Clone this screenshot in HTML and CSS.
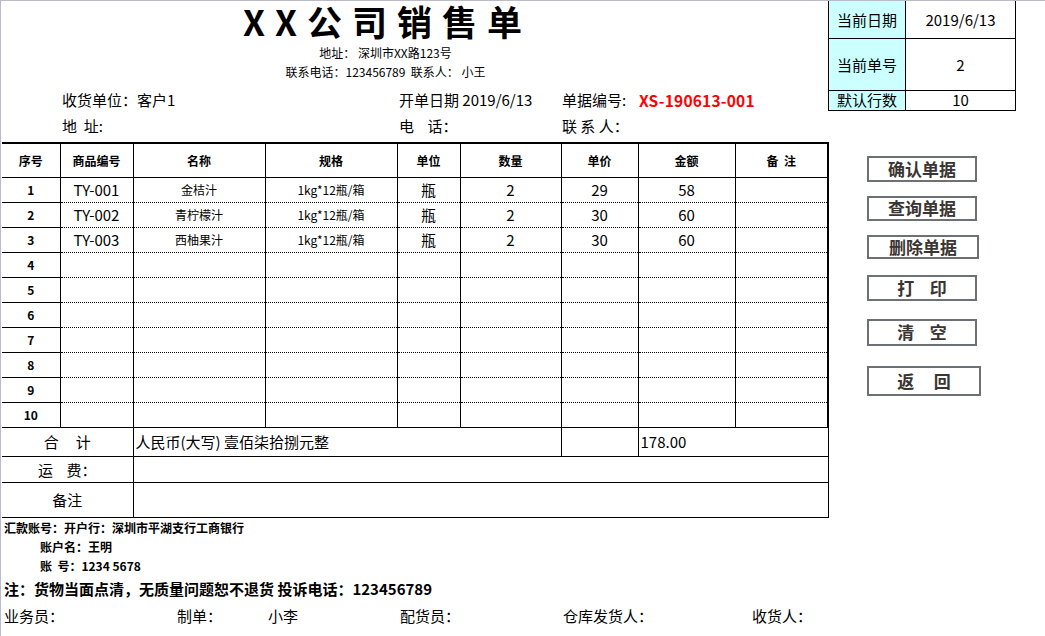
FILE: index.html
```html
<!DOCTYPE html>
<html lang="zh-CN">
<head>
<meta charset="utf-8">
<title>XX公司销售单</title>
<link rel="stylesheet" href="styles.css">
</head>
<body>
<div class="sheet">
  <div class="main">
    <header class="head">
      <h1 class="title">XX公司销售单</h1>
      <div class="addr">地址： 深圳市XX路123号</div>
      <div class="addr">联系电话：123456789&nbsp;&nbsp;联系人： 小王</div>
      <div class="info">
        <span>收货单位：客户1</span>
        <span>开单日期 2019/6/13</span>
        <span>单据编号:</span>
        <span class="red">XS-190613-001</span>
      </div>
      <div class="info">
        <span>地&nbsp;&nbsp;址:</span>
        <span>电&nbsp;&nbsp;&nbsp;&nbsp;话：</span>
        <span>联 系 人：</span>
        <span></span>
      </div>
    </header>

    <table class="grid">
      <colgroup>
        <col class="c1"><col class="c2"><col class="c3"><col class="c4"><col class="c5">
        <col class="c6"><col class="c7"><col class="c8"><col class="c9">
      </colgroup>
      <thead>
        <tr>
          <th>序号</th><th>商品编号</th><th>名称</th><th>规格</th><th>单位</th>
          <th>数量</th><th>单价</th><th>金额</th><th class="last">备&nbsp;&nbsp;注</th>
        </tr>
      </thead>
      <tbody class="rows">
        <tr><td class="no">1</td><td class="big">TY-001</td><td>金桔汁</td><td>1kg*12瓶/箱</td><td class="big">瓶</td><td class="big">2</td><td class="big">29</td><td class="big">58</td><td class="last"></td></tr>
        <tr><td class="no">2</td><td class="big">TY-002</td><td>青柠檬汁</td><td>1kg*12瓶/箱</td><td class="big">瓶</td><td class="big">2</td><td class="big">30</td><td class="big">60</td><td class="last"></td></tr>
        <tr><td class="no">3</td><td class="big">TY-003</td><td>西柚果汁</td><td>1kg*12瓶/箱</td><td class="big">瓶</td><td class="big">2</td><td class="big">30</td><td class="big">60</td><td class="last"></td></tr>
        <tr><td class="no">4</td><td></td><td></td><td></td><td></td><td></td><td></td><td></td><td class="last"></td></tr>
        <tr><td class="no">5</td><td></td><td></td><td></td><td></td><td></td><td></td><td></td><td class="last"></td></tr>
        <tr><td class="no">6</td><td></td><td></td><td></td><td></td><td></td><td></td><td></td><td class="last"></td></tr>
        <tr><td class="no">7</td><td></td><td></td><td></td><td></td><td></td><td></td><td></td><td class="last"></td></tr>
        <tr><td class="no">8</td><td></td><td></td><td></td><td></td><td></td><td></td><td></td><td class="last"></td></tr>
        <tr><td class="no">9</td><td></td><td></td><td></td><td></td><td></td><td></td><td></td><td class="last"></td></tr>
        <tr><td class="no">10</td><td></td><td></td><td></td><td></td><td></td><td></td><td></td><td class="last"></td></tr>
      </tbody>
      <tbody class="sum">
        <tr class="total">
          <td colspan="2" class="lbl">合&nbsp;&nbsp;&nbsp;&nbsp;&nbsp;计</td>
          <td colspan="4" class="left">人民币(大写) 壹佰柒拾捌元整</td>
          <td></td>
          <td colspan="2" class="left">178.00</td>
        </tr>
        <tr class="freight">
          <td colspan="2" class="lbl">运&nbsp;&nbsp;&nbsp;&nbsp;费：</td>
          <td colspan="7"></td>
        </tr>
        <tr class="note">
          <td colspan="2" class="lbl">备注</td>
          <td colspan="7"></td>
        </tr>
      </tbody>
    </table>

    <footer class="foot">
      <div class="fline">汇款账号：开户行：深圳市平湖支行工商银行</div>
      <div class="fline indent">账户名：王明</div>
      <div class="fline indent">账&nbsp;&nbsp;号：1234 5678</div>
      <div class="notice">注：货物当面点清，无质量问题恕不退货 投诉电话：123456789</div>
      <div class="sign">
        <span>业务员：</span>
        <span>制单：</span>
        <span>小李</span>
        <span>配货员：</span>
        <span>仓库发货人：</span>
        <span>收货人：</span>
      </div>
    </footer>
  </div>

  <aside class="side">
    <table class="meta">
      <tr class="m1"><th>当前日期</th><td>2019/6/13</td></tr>
      <tr class="m2"><th>当前单号</th><td>2</td></tr>
      <tr class="m3"><th>默认行数</th><td>10</td></tr>
    </table>
    <div class="buttons">
      <button class="btn">确认单据</button>
      <button class="btn">查询单据</button>
      <button class="btn">删除单据</button>
      <button class="btn">打&nbsp;&nbsp;&nbsp;&nbsp;印</button>
      <button class="btn">清&nbsp;&nbsp;&nbsp;&nbsp;空</button>
      <button class="btn">返&nbsp;&nbsp;&nbsp;&nbsp;&nbsp;回</button>
    </div>
  </aside>
</div>
</body>
</html>
```

FILE: styles.css
```css
* { box-sizing: border-box; }

html, body {
  margin: 0;
  padding: 0;
  background: #fff;
}

body {
  width: 1045px;
  height: 636px;
  overflow: hidden;
  border-top: 1px solid #b9bcc8;
  border-left: 1px solid #b9bcc8;
  font-family: "Noto Sans CJK SC", "Liberation Sans", sans-serif;
  color: #000;
}

.sheet {
  display: grid;
  grid-template-columns: 827px 1fr;
}

/* ---------- header ---------- */
.head {
  height: 141px;
}

.title {
  margin: 0;
  height: 40px;
  line-height: 40px;
  font-size: 35px;
  font-weight: 700;
  letter-spacing: 10px;
  text-align: left;
  padding-left: 242px;
  white-space: nowrap;
}

.addr {
  font-size: 12px;
  line-height: 19px;
  text-align: center;
  padding-right: 58px;
}
.addr:first-of-type { margin-top: 2px; }

.info {
  display: grid;
  grid-template-columns: 337px 163px 77px 1fr;
  padding-left: 61px;
  font-size: 15px;
  height: 26px;
  line-height: 26px;
}
.head .addr + .info { margin-top: 6px; }

.red {
  color: #ff0000;
  font-weight: 700;
  font-size: 15.5px;
  letter-spacing: 0.2px;
}

/* ---------- main table ---------- */
.grid {
  border-collapse: collapse;
  table-layout: fixed;
  width: 826px;
  margin-left: 1px;
  font-size: 12px;
}

.c1 { width: 58px; }
.c2 { width: 73px; }
.c3 { width: 132px; }
.c4 { width: 132px; }
.c5 { width: 63px; }
.c6 { width: 101px; }
.c7 { width: 77px; }
.c8 { width: 97px; }
.c9 { width: 93px; }

.grid th,
.grid td {
  padding: 0;
  border: 1px solid #000;
  text-align: center;
  vertical-align: middle;
  white-space: nowrap;
}

.grid thead th {
  height: 34px;
  border-top: 2px solid #000;
  font-weight: 700;
}
.grid thead th:first-child { border-left: 0; }

.rows td {
  height: 25px;
  border-top: 1px dotted #000;
  border-bottom: 1px dotted #000;
}
.rows tr:first-child td { border-top: 1px solid #000; }
.rows tr:last-child td { border-bottom: 1px solid #000; }
.rows td.no {
  font-weight: 700;
  border-left: 0;
  border-top: 1px solid #000;
  border-bottom: 1px solid #000;
}
.grid .last { border-right: 2px solid #000; }

.big { font-size: 15px; }

.sum td {
  font-size: 15px;
}
.sum td:first-child { border-left: 0; }
.sum .left {
  text-align: left;
  padding-left: 2px;
}
.total td { height: 29px; }
.freight td { height: 26px; }
.note td { height: 35px; }

/* ---------- footer ---------- */
.foot {
  padding-left: 3px;
}
.fline {
  font-size: 12px;
  font-weight: 700;
  line-height: 19px;
}
.indent { padding-left: 36px; }

.notice {
  margin-top: 2px;
  font-size: 15px;
  font-weight: 700;
  line-height: 24px;
}

.sign {
  margin-top: 3px;
  display: grid;
  grid-template-columns: 173px 91px 132px 163px 189px 1fr;
  font-size: 15px;
  line-height: 24px;
}

/* ---------- side panel ---------- */
.meta {
  border-collapse: collapse;
  width: 188px;
  font-size: 15px;
}
.meta th,
.meta td {
  border: 1px solid #000;
  padding: 0;
  text-align: center;
  font-weight: 400;
}
.meta th {
  width: 77px;
  background: #ccffff;
}
.meta tr:first-child th,
.meta tr:first-child td { border-top: 0; }
.m1 th, .m1 td { height: 37px; }
.m2 th, .m2 td { height: 52px; }
.m3 th, .m3 td { height: 20px; line-height: 18px; }

.buttons {
  display: flex;
  flex-direction: column;
  align-items: flex-start;
  padding-left: 39px;
  padding-top: 45px;
}

.btn {
  width: 110px;
  height: 26px;
  margin: 0 0 14px 0;
  padding: 0;
  border: 2px solid #6d7074;
  background: #fff;
  font-family: "Noto Sans CJK SC", sans-serif;
  font-size: 17px;
  font-weight: 700;
  line-height: 20px;
  color: #3a3532;
  white-space: nowrap;
}
.btn:nth-child(2) { height: 25px; }
.btn:nth-child(3) { width: 112px; height: 24px; margin-bottom: 16px; }
.btn:nth-child(4) { margin-bottom: 18px; }
.btn:nth-child(5) { height: 27px; margin-bottom: 20px; }
.btn:nth-child(6) { width: 114px; height: 30px; }
```
